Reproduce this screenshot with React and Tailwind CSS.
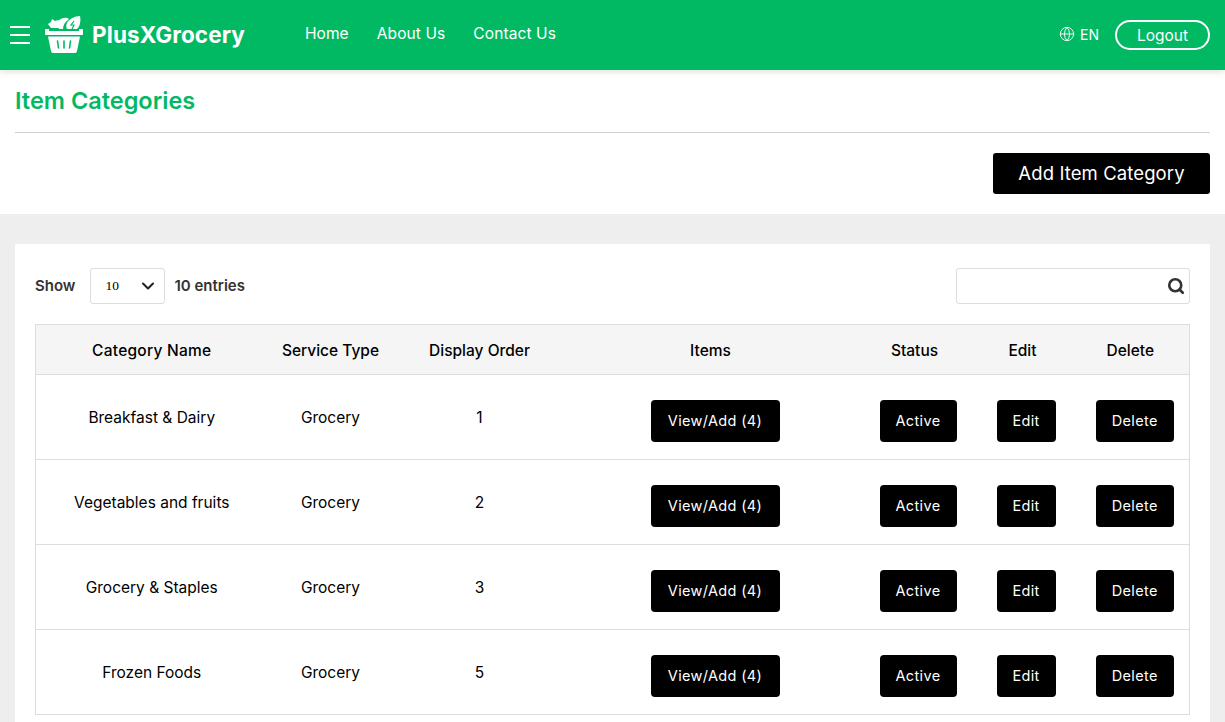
import React from "react";
import { Globe, Search, ChevronDown } from "lucide-react";

const rows = [
  { name: "Breakfast & Dairy", order: 1 },
  { name: "Vegetables and fruits", order: 2 },
  { name: "Grocery & Staples", order: 3 },
  { name: "Frozen Foods", order: 5 },
];

const BasketLogo = () => (
  <svg width="38" height="39" viewBox="0 0 38 39" fill="none">
    {/* greens sticking out of the basket */}
    <path d="M3 9l3-2 1-3 3 2 3-1 2 3-1 5H6z" fill="#fff" />
    <path d="M13 6c2-2 6-4 9-3 2 0 2 1 1 2-3 2-5 5-5 9h-4c-2-3-2-6-1-8z" fill="#fff" />
    <path d="M22 8c2-4 8-7 13-7 1 5 0 10-3 13H22c-1-2-1-4 0-6z" fill="#fff" />
    <path d="M29 6l-3 4h3l-2 4" stroke="#02b963" strokeWidth="1.200" />
    {/* rim */}
    <path d="M1 14h3v2h30v-2h3c.6 0 1 .4 1 1v4c0 .6-.4 1-1 1H1c-.6 0-1-.4-1-1v-4c0-.6.4-1 1-1z" fill="#fff" />
    {/* basket body */}
    <path d="M3 21.500h32L32 36c-.3 1.500-1 2-2.500 2h-21C7 38 6.300 37.500 6 36z" fill="#fff" />
    <path d="M12.500 26l1 7M19 26v7M25.500 26l-1 7" stroke="#02b963" strokeWidth="1.600" strokeLinecap="round" />
  </svg>
);

const ActionButton = ({ children, className = "" }) => (
  <button className={`h-[42px] bg-black text-white rounded-[4px] text-[14.500px] tracking-[0.35px] mt-[7px] ${className}`}>
    {children}
  </button>
);

export default function App() {
  return (
    <div className="h-[722px] overflow-hidden bg-[#eeeeee] font-['Inter','Liberation_Sans',sans-serif] text-black">
      <header className="relative z-10 h-[70px] bg-[#02b963] flex items-center pl-[10px] pr-[15px] text-white shadow-[0_2px_6px_rgba(0,0,0,0.12)]">
        <div className="w-[20px] flex flex-col gap-[6px]">
          <span className="h-[2px] bg-white" />
          <span className="h-[2px] bg-white" />
          <span className="h-[2px] bg-white" />
        </div>
        <div className="ml-[15px] mb-[1px]">
          <BasketLogo />
        </div>
        <span className="ml-[9px] text-[22.500px] font-bold tracking-[0.1px]">PlusXGrocery</span>
        <nav className="ml-[60px] mb-[2px] flex gap-[28px] text-[15.500px] tracking-[0.1px]">
          <a>Home</a>
          <a>About Us</a>
          <a>Contact Us</a>
        </nav>
        <div className="ml-auto mb-[2px] flex items-center gap-[5px] text-[14px]">
          <Globe size={16} strokeWidth={1.4} />
          <span>EN</span>
        </div>
        <button className="ml-[16px] w-[95px] h-[30px] rounded-full border-2 border-white text-[15.500px] pt-[2px]">Logout</button>
      </header>

      <section className="h-[144px] bg-white px-[15px]">
        <h1 className="pt-[17px] h-[63px] border-b border-[#cfcfcf] text-[23.500px] leading-[28px] font-semibold text-[#02b963]">
          Item Categories
        </h1>
        <div className="flex justify-end pt-[20px]">
          <button className="w-[217px] h-[41px] bg-black text-white rounded-[3px] text-[18.500px] tracking-[0.1px]">Add Item Category</button>
        </div>
      </section>

      <main className="pt-[30px] px-[15px]">
        <div className="bg-white px-[20px] pt-[24px] pb-[40px] h-[600px]">
          <div className="flex items-center h-[36px] text-[#333333] text-[15px] font-semibold">
            <span>Show</span>
            <div className="ml-[15px] w-[75px] h-[36px] border border-[#dddddd] rounded-[3px] flex items-center justify-between pl-[14px] pr-[6px]">
              <span className="font-['Liberation_Serif',serif] font-normal text-[13.500px] text-black">10</span>
              <ChevronDown size={20} strokeWidth={2.500} className="text-[#222222]" />
            </div>
            <span className="ml-[9px]">10 entries</span>
            <div className="ml-auto w-[234px] h-[36px] border border-[#dddddd] rounded-[3px] flex items-center justify-end pr-[4px]">
              <Search size={18} strokeWidth={3.500} className="text-[#333333]" />
            </div>
          </div>

          <table className="mt-[20px] w-[1155px] table-fixed border-collapse border border-[#dddddd] text-center text-[15.500px]">
            <thead>
              <tr className="h-[50px] bg-[#f5f5f5] border-b border-[#dddddd]">
                <th className="w-[232px] font-medium tracking-[0.25px] pt-[2px]">Category Name</th>
                <th className="w-[126px] font-medium pt-[2px]">Service Type</th>
                <th className="w-[172px] font-medium pt-[2px]">Display Order</th>
                <th className="w-[290px] font-medium pt-[2px]">Items</th>
                <th className="w-[118px] font-medium pt-[2px]">Status</th>
                <th className="w-[98px] font-medium pt-[2px]">Edit</th>
                <th className="font-medium pt-[2px]">Delete</th>
              </tr>
            </thead>
            <tbody>
              {rows.map((row) => (
                <tr key={row.order} className="h-[85px] border-b border-[#dddddd]">
                  <td className="pt-[2px]">{row.name}</td>
                  <td className="pt-[2px]">Grocery</td>
                  <td className="pt-[2px]">{row.order}</td>
                  <td><ActionButton className="w-[129px] ml-[9px]">View/Add (4)</ActionButton></td>
                  <td><ActionButton className="w-[77px] ml-[7px]">Active</ActionButton></td>
                  <td><ActionButton className="w-[59px] ml-[7px]">Edit</ActionButton></td>
                  <td><ActionButton className="w-[78px] ml-[9px]">Delete</ActionButton></td>
                </tr>
              ))}
            </tbody>
          </table>
        </div>
      </main>
    </div>
  );
}
